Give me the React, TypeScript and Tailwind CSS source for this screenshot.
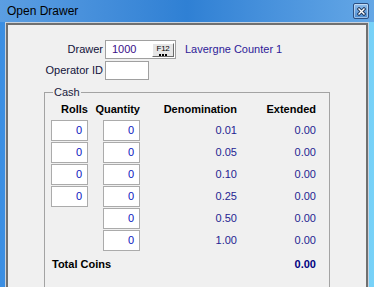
import React from 'react';

const rows = [
  { rolls: '0', qty: '0', denom: '0.01', ext: '0.00' },
  { rolls: '0', qty: '0', denom: '0.05', ext: '0.00' },
  { rolls: '0', qty: '0', denom: '0.10', ext: '0.00' },
  { rolls: '0', qty: '0', denom: '0.25', ext: '0.00' },
  { rolls: null, qty: '0', denom: '0.50', ext: '0.00' },
  { rolls: null, qty: '0', denom: '1.00', ext: '0.00' },
];

const NumBox = ({ value }: { value: string }) => (
  <div className="w-[37px] h-[21px] bg-white border border-[#ababab] flex items-center justify-end pr-[5px] text-[#0a14c0]">
    {value}
  </div>
);

const CloseButton = () => (
  <div className="w-[16px] h-[16px] rounded-[2px] border border-[#2c4f80] bg-gradient-to-b from-[#8fbdeb] to-[#4a8bd0] flex items-center justify-center shadow-[inset_0_0_0_1px_rgba(255,255,255,0.45)]">
    <svg width="9" height="9" viewBox="0 0 9 9">
      <path d="M2 2 L7 7 M7 2 L2 7" stroke="#1d3557" strokeWidth="3.2" strokeLinecap="square" />
      <path d="M2 2 L7 7 M7 2 L2 7" stroke="#ffffff" strokeWidth="1.4" strokeLinecap="square" />
    </svg>
  </div>
);

// F12 lookup button inside the drawer field
const F12Button = () => (
  <div className="w-[22px] h-[14px] bg-[#e6e6e6] border border-t-white border-l-white border-r-[#6b6b6b] border-b-[#6b6b6b] flex flex-col items-center pt-[1px]">
    <span className="text-[8px] text-black leading-[8px] tracking-[-0.3px]">F12</span>
    <div className="flex gap-[1px] mt-[1px]">
      <div className="w-[2px] h-[2px] bg-black" />
      <div className="w-[2px] h-[2px] bg-black" />
      <div className="w-[2px] h-[2px] bg-black" />
    </div>
  </div>
);

export default function App() {
  return (
    <div className="w-[374px] h-[287px] overflow-hidden bg-gradient-to-r from-[#3b8ee2] via-[#4a9be6] to-[#78d2f8] font-['Liberation_Sans',Arial,sans-serif] text-[11px] leading-[13px]">
      {/* title bar */}
      <div className="h-[22px] flex items-center justify-between pl-[7px] pr-[5px] bg-gradient-to-r from-[#5b9ee2] via-[#2f80d4] to-[#64a7e6]">
        <span className="text-[12px] text-black leading-[14px]">Open Drawer</span>
        <CloseButton />
      </div>

      <div className="ml-[5px] mr-[5px] border border-b-0 border-[#c9d3de]">
        <div className="h-[300px] border-2 border-b-0 border-[#707070] bg-[#f0f0f0] pt-[15px] text-[#12123a]">
          {/* drawer */}
          <div className="flex items-center">
            <div className="w-[95px] text-right">Drawer</div>
            <div className="ml-[2px] w-[71px] h-[19px] bg-white border border-[#a0a0a0] flex items-center justify-between pl-[6px] pr-[1px]">
              <span className="text-[#3a0e88]">1000</span>
              <F12Button />
            </div>
            <span className="ml-[9px] text-[#2e1a98]">Lavergne Counter 1</span>
          </div>

          {/* operator */}
          <div className="flex items-center mt-[2px]">
            <div className="w-[95px] text-right">Operator ID</div>
            <div className="ml-[2px] w-[44px] h-[19px] bg-white border border-[#a0a0a0]" />
          </div>

          {/* cash group */}
          <div className="relative ml-[36px] mt-[12px] w-[286px] h-[200px] border border-b-0 border-[#a3a3a3]">
            <span className="absolute left-[8px] -top-[7px] bg-[#f0f0f0] px-[1px] text-[#1a1a3c]">Cash</span>

            <div className="pl-[6px] pt-[10px]">
              <div className="flex font-bold text-black h-[13px]">
                <div className="w-[37px] flex justify-end whitespace-nowrap">Rolls</div>
                <div className="ml-[15px] w-[37px] flex justify-end whitespace-nowrap">Quantity</div>
                <div className="w-[97px] flex justify-end whitespace-nowrap">Denomination</div>
                <div className="w-[79px] flex justify-end whitespace-nowrap">Extended</div>
              </div>

              <div className="mt-[4px] flex flex-col gap-[1px]">
                {rows.map((r, i) => (
                  <div key={i} className="flex items-center h-[21px]">
                    <div className="w-[37px]">{r.rolls !== null && <NumBox value={r.rolls} />}</div>
                    <div className="ml-[15px]">
                      <NumBox value={r.qty} />
                    </div>
                    <div className="w-[97px] text-right text-[#1f2492]">{r.denom}</div>
                    <div className="w-[79px] text-right text-[#1f2492]">{r.ext}</div>
                  </div>
                ))}
              </div>

              <div className="mt-[7px] flex font-bold">
                <div className="w-[186px] pl-[1px] text-black">Total Coins</div>
                <div className="w-[79px] text-right text-[#000080]">0.00</div>
              </div>
            </div>
          </div>
        </div>
      </div>
    </div>
  );
}
